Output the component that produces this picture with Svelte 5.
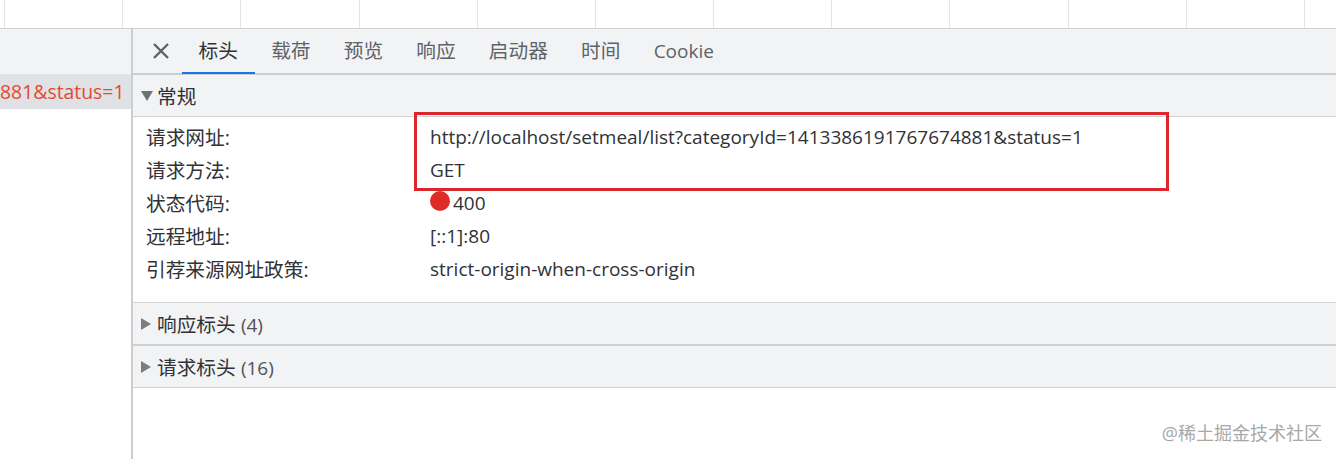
<script lang="ts">
  const tabs = ["标头", "载荷", "预览", "响应", "启动器", "时间", "Cookie"];
  const general = [
    { name: "请求网址:", value: "http://localhost/setmeal/list?categoryId=1413386191767674881&status=1" },
    { name: "请求方法:", value: "GET" },
    { name: "状态代码:", value: "400", status: true },
    { name: "远程地址:", value: "[::1]:80" },
    { name: "引荐来源网址政策:", value: "strict-origin-when-cross-origin" },
  ];
  const ticks = Array.from({ length: 12 }, (_, i) => i);
</script>

<div class="page">
  <div class="ruler">
    {#each ticks as t (t)}
      <div class="tick"></div>
    {/each}
  </div>

  <div class="main">
    <aside class="list">
      <div class="list-head"></div>
      <div class="list-row">881&status=1</div>
    </aside>

    <section class="detail">
      <nav class="tabs">
        <svg class="close" width="18" height="18" viewBox="0 0 18 18">
          <path d="M2 2 L16 16 M16 2 L2 16" stroke="#5f6368" stroke-width="2.4" fill="none" />
        </svg>
        {#each tabs as tab, i}
          <div class="tab" class:active={i === 0} class:latin={tab === "Cookie"}>{tab}</div>
        {/each}
      </nav>

      <div class="section-head open">
        <span class="arrow-down"></span>
        <span>常规</span>
      </div>
      <div class="rows">
        {#each general as row}
          <div class="row">
            <div class="row-name">{row.name}</div>
            <div class="row-value">
              {#if row.status}<span class="dot"></span>{/if}<span>{row.value}</span>
            </div>
          </div>
        {/each}
        <div class="highlight"></div>
      </div>

      <div class="section-head closed">
        <span class="arrow-right"></span>
        <span>响应标头 <span class="count">(4)</span></span>
      </div>
      <div class="section-head closed last">
        <span class="arrow-right"></span>
        <span>请求标头 <span class="count">(16)</span></span>
      </div>

      <div class="watermark">@稀土掘金技术社区</div>
    </section>
  </div>
</div>

<style>
  :global(body) {
    background: #fff;
  }

  .page {
    width: 1336px;
    height: 459px;
    overflow: hidden;
    display: flex;
    flex-direction: column;
    font-family: "Open Sans", "Noto Sans CJK SC", sans-serif;
    font-size: 19.7px;
    color: #303236;
  }

  .ruler {
    height: 28px;
    display: flex;
    padding-left: 4px;
    border-bottom: 1px solid #cfd0d2;
    flex: none;
  }

  .tick {
    width: 118.18px;
    flex: none;
    box-sizing: border-box;
    border-left: 1px solid #e3e3e3;
  }

  .main {
    flex: 1;
    display: flex;
    min-height: 0;
  }

  .list {
    width: 133px;
    box-sizing: border-box;
    flex: none;
    border-right: 2px solid #cccdcf;
  }

  .list-head {
    height: 45px;
    background: #f1f3f4;
  }

  .list-row {
    height: 35px;
    line-height: 35px;
    font-size: 19.4px;
    background: #dfe1e4;
    color: #e5492f;
    white-space: nowrap;
  }

  .detail {
    flex: 1;
    position: relative;
    min-width: 0;
  }

  .tabs {
    height: 44px;
    display: flex;
    align-items: stretch;
    background: #f1f3f4;
    border-bottom: 2px solid #cbcdcf;
    padding-left: 19px;
    color: #5f6368;
  }

  .close {
    align-self: center;
    margin-right: 12px;
    flex: none;
  }

  .tab {
    padding: 0 16.6px;
    line-height: 44px;
    position: relative;
    white-space: nowrap;
  }

  .tab.latin {
    font-size: 19px;
  }

  .tab.active {
    color: #303236;
    box-shadow: inset 0 -2px 0 #1a73e8;
    margin-bottom: -1px;
  }

  .section-head {
    display: flex;
    align-items: center;
    gap: 4px;
    background: #f1f3f4;
    padding-left: 8px;
    box-sizing: border-box;
  }

  .section-head.open {
    height: 42px;
    border-bottom: 1px solid #cfd1d3;
  }

  .section-head.closed {
    height: 44px;
    border-top: 1px solid #d3d5d7;
    border-bottom: 2px solid #cfd1d3;
  }

  .section-head.last {
    height: 42px;
    border-top: 0;
    border-bottom-width: 1px;
  }

  .count {
    font-size: 19px;
    color: #505256;
  }

  .arrow-down {
    width: 0;
    height: 0;
    border-left: 6px solid transparent;
    border-right: 6px solid transparent;
    border-top: 10px solid #6e7073;
  }

  .arrow-right {
    width: 0;
    height: 0;
    border-top: 6px solid transparent;
    border-bottom: 6px solid transparent;
    border-left: 10px solid #7b7d80;
    margin-right: 2px;
  }

  .rows {
    position: relative;
    padding: 4px 0 16px 13px;
  }

  .row {
    display: flex;
    height: 33px;
    line-height: 33px;
    white-space: nowrap;
  }

  .row-name {
    width: 284px;
    flex: none;
  }

  .row-value {
    display: flex;
    flex: 1;
    font-size: 19px;
  }

  .dot {
    flex: none;
    width: 20px;
    height: 20px;
    border-radius: 50%;
    background: #dc2c25;
    margin: 4px 3px 0 0;
  }

  .highlight {
    position: absolute;
    left: 281px;
    top: -5px;
    width: 755px;
    height: 79px;
    box-sizing: border-box;
    border: 3px solid #d9272e;
  }

  .watermark {
    position: absolute;
    right: 14px;
    bottom: 14px;
    font-size: 18px;
    color: #a8a8a8;
    white-space: nowrap;
  }
</style>
